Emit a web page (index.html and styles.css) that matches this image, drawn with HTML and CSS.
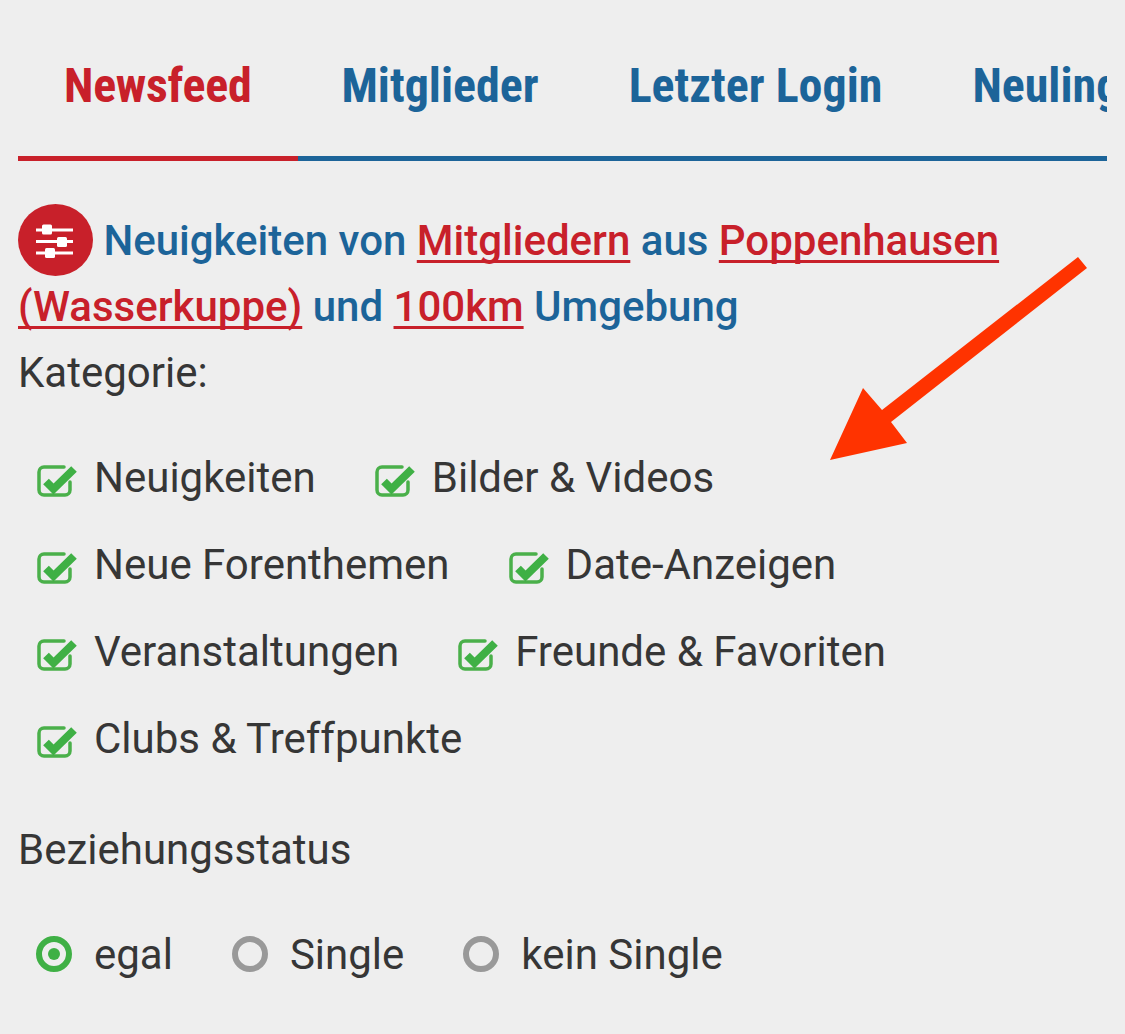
FILE: index.html
```html
<!DOCTYPE html>
<html lang="de">
<head>
<meta charset="utf-8">
<title>Newsfeed</title>
<link rel="stylesheet" href="styles.css">
</head>
<body>
<main class="page">
  <nav class="tabs">
    <a class="tab tab-active">Newsfeed</a>
    <a class="tab">Mitglieder</a>
    <a class="tab">Letzter Login</a>
    <a class="tab">Neulinge</a>
  </nav>
  <h1 class="headline">
    <span class="filter-badge">
      <svg viewBox="0 0 75 72" width="75" height="72" aria-hidden="true">
        <g fill="#fff">
          <rect x="18" y="24.500" width="37" height="3"/>
          <rect x="24" y="20.500" width="10" height="10" rx="1.500"/>
          <rect x="18" y="36" width="37" height="3"/>
          <rect x="39" y="33" width="10" height="10" rx="1.500"/>
          <rect x="18" y="47.500" width="37" height="3"/>
          <rect x="27" y="44" width="10" height="10" rx="1.500"/>
        </g>
      </svg>
    </span>
    Neuigkeiten von <a class="link">Mitgliedern</a> aus <a class="link">Poppenhausen (Wasserkuppe)</a> und <a class="link">100km</a> Umgebung
  </h1>
  <p class="label">Kategorie:</p>
  <div class="options">
    <label class="option"><svg class="check" viewBox="0 0 40 40" width="40" height="40"><path class="check-box" d="M33 24v8a5 5 0 0 1-5 5H7a5 5 0 0 1-5-5V14a5 5 0 0 1 5-5h20"/><path class="check-mark" d="M9 23.500 16.500 31 37 11"/></svg>Neuigkeiten</label>
    <label class="option"><svg class="check" viewBox="0 0 40 40" width="40" height="40"><path class="check-box" d="M33 24v8a5 5 0 0 1-5 5H7a5 5 0 0 1-5-5V14a5 5 0 0 1 5-5h20"/><path class="check-mark" d="M9 23.500 16.500 31 37 11"/></svg>Bilder &amp; Videos</label>
    <label class="option"><svg class="check" viewBox="0 0 40 40" width="40" height="40"><path class="check-box" d="M33 24v8a5 5 0 0 1-5 5H7a5 5 0 0 1-5-5V14a5 5 0 0 1 5-5h20"/><path class="check-mark" d="M9 23.500 16.500 31 37 11"/></svg>Neue Forenthemen</label>
    <label class="option"><svg class="check" viewBox="0 0 40 40" width="40" height="40"><path class="check-box" d="M33 24v8a5 5 0 0 1-5 5H7a5 5 0 0 1-5-5V14a5 5 0 0 1 5-5h20"/><path class="check-mark" d="M9 23.500 16.500 31 37 11"/></svg>Date-Anzeigen</label>
    <label class="option"><svg class="check" viewBox="0 0 40 40" width="40" height="40"><path class="check-box" d="M33 24v8a5 5 0 0 1-5 5H7a5 5 0 0 1-5-5V14a5 5 0 0 1 5-5h20"/><path class="check-mark" d="M9 23.500 16.500 31 37 11"/></svg>Veranstaltungen</label>
    <label class="option"><svg class="check" viewBox="0 0 40 40" width="40" height="40"><path class="check-box" d="M33 24v8a5 5 0 0 1-5 5H7a5 5 0 0 1-5-5V14a5 5 0 0 1 5-5h20"/><path class="check-mark" d="M9 23.500 16.500 31 37 11"/></svg>Freunde &amp; Favoriten</label>
    <label class="option"><svg class="check" viewBox="0 0 40 40" width="40" height="40"><path class="check-box" d="M33 24v8a5 5 0 0 1-5 5H7a5 5 0 0 1-5-5V14a5 5 0 0 1 5-5h20"/><path class="check-mark" d="M9 23.500 16.500 31 37 11"/></svg>Clubs &amp; Treffpunkte</label>
  </div>
  <p class="label label-status">Beziehungsstatus</p>
  <div class="radios">
    <label class="radio"><span class="radio-dot radio-on"></span>egal</label>
    <label class="radio"><span class="radio-dot"></span>Single</label>
    <label class="radio"><span class="radio-dot"></span>kein Single</label>
  </div>
  <svg class="arrow" viewBox="0 0 1125 1034" width="1125" height="1034" aria-hidden="true">
    <path d="M1078 257 1087 268 891 422 907 443 830 460 863 388 882 410Z" fill="#ff3300"/>
  </svg>
</main>
</body>
</html>
```
FILE: styles.css
```css
* { box-sizing: border-box; }
html, body { margin: 0; padding: 0; background: #eeeeee; }
body { width: 1125px; height: 1034px; overflow: hidden; font-family: Roboto, "Noto Sans", sans-serif; color: #363636; }
.page { padding: 0 18px; width: 1125px; }
.tabs { display: flex; height: 162px; padding-top: 60px; overflow: hidden; }
.tab {
  flex: none;
  height: 101px;
  padding: 0 47px 0 43px;
  line-height: 52px;
  border-bottom: 5px solid #1c6499;
  color: #1c6499;
  font-family: "Roboto Condensed", Roboto, sans-serif;
  font-stretch: 75%;
  font-weight: 700;
  font-size: 48px;
}
.tab-active { color: #c8202a; border-bottom-color: #c8202a; letter-spacing: -0.25px; padding: 0 47px 0 46px; }
.headline {
  margin: 46px 0 0;
  font-size: 42px;
  font-weight: 500;
  line-height: 66px;
  color: #1c6499;
  height: 132px;
}
.filter-badge {
  display: inline-flex;
  width: 75px;
  height: 72px;
  margin: -6px 0;
  vertical-align: middle;
  border-radius: 50%;
  background: #c8202a;
  position: relative;
  top: -4px;
}
.link { color: #c8202a; text-decoration: underline; text-decoration-thickness: 3px; text-underline-offset: 5px; text-decoration-skip-ink: none; }
.label { margin: 0; font-size: 42px; line-height: 66px; color: #363636; }
.options { display: flex; flex-wrap: wrap; column-gap: 59px; padding: 28px 0 0 19px; }
.option { display: flex; align-items: center; height: 87px; font-size: 42px; color: #363636; }
.check { margin-right: 17px; flex: none; }
.check-box { fill: none; stroke: #4ab04a; stroke-width: 3.500; stroke-linecap: round; }
.check-mark { fill: none; stroke: #3fb045; stroke-width: 8; }
.label-status { margin-top: 35px; }
.radios { display: flex; padding: 33px 0 0 18px; }
.radio { display: flex; align-items: center; height: 76px; margin-right: 59px; font-size: 42px; color: #363636; }
.radio-dot {
  flex: none;
  width: 36px;
  height: 36px;
  margin-right: 22px;
  border: 6px solid #999;
  border-radius: 50%;
}
.radio-on { border-color: #3fb045; position: relative; }
.radio-on::after {
  content: "";
  position: absolute;
  left: 6px;
  top: 6px;
  width: 12px;
  height: 12px;
  border-radius: 50%;
  background: #3fb045;
}
.arrow { position: absolute; left: 0; top: 0; pointer-events: none; }
```
